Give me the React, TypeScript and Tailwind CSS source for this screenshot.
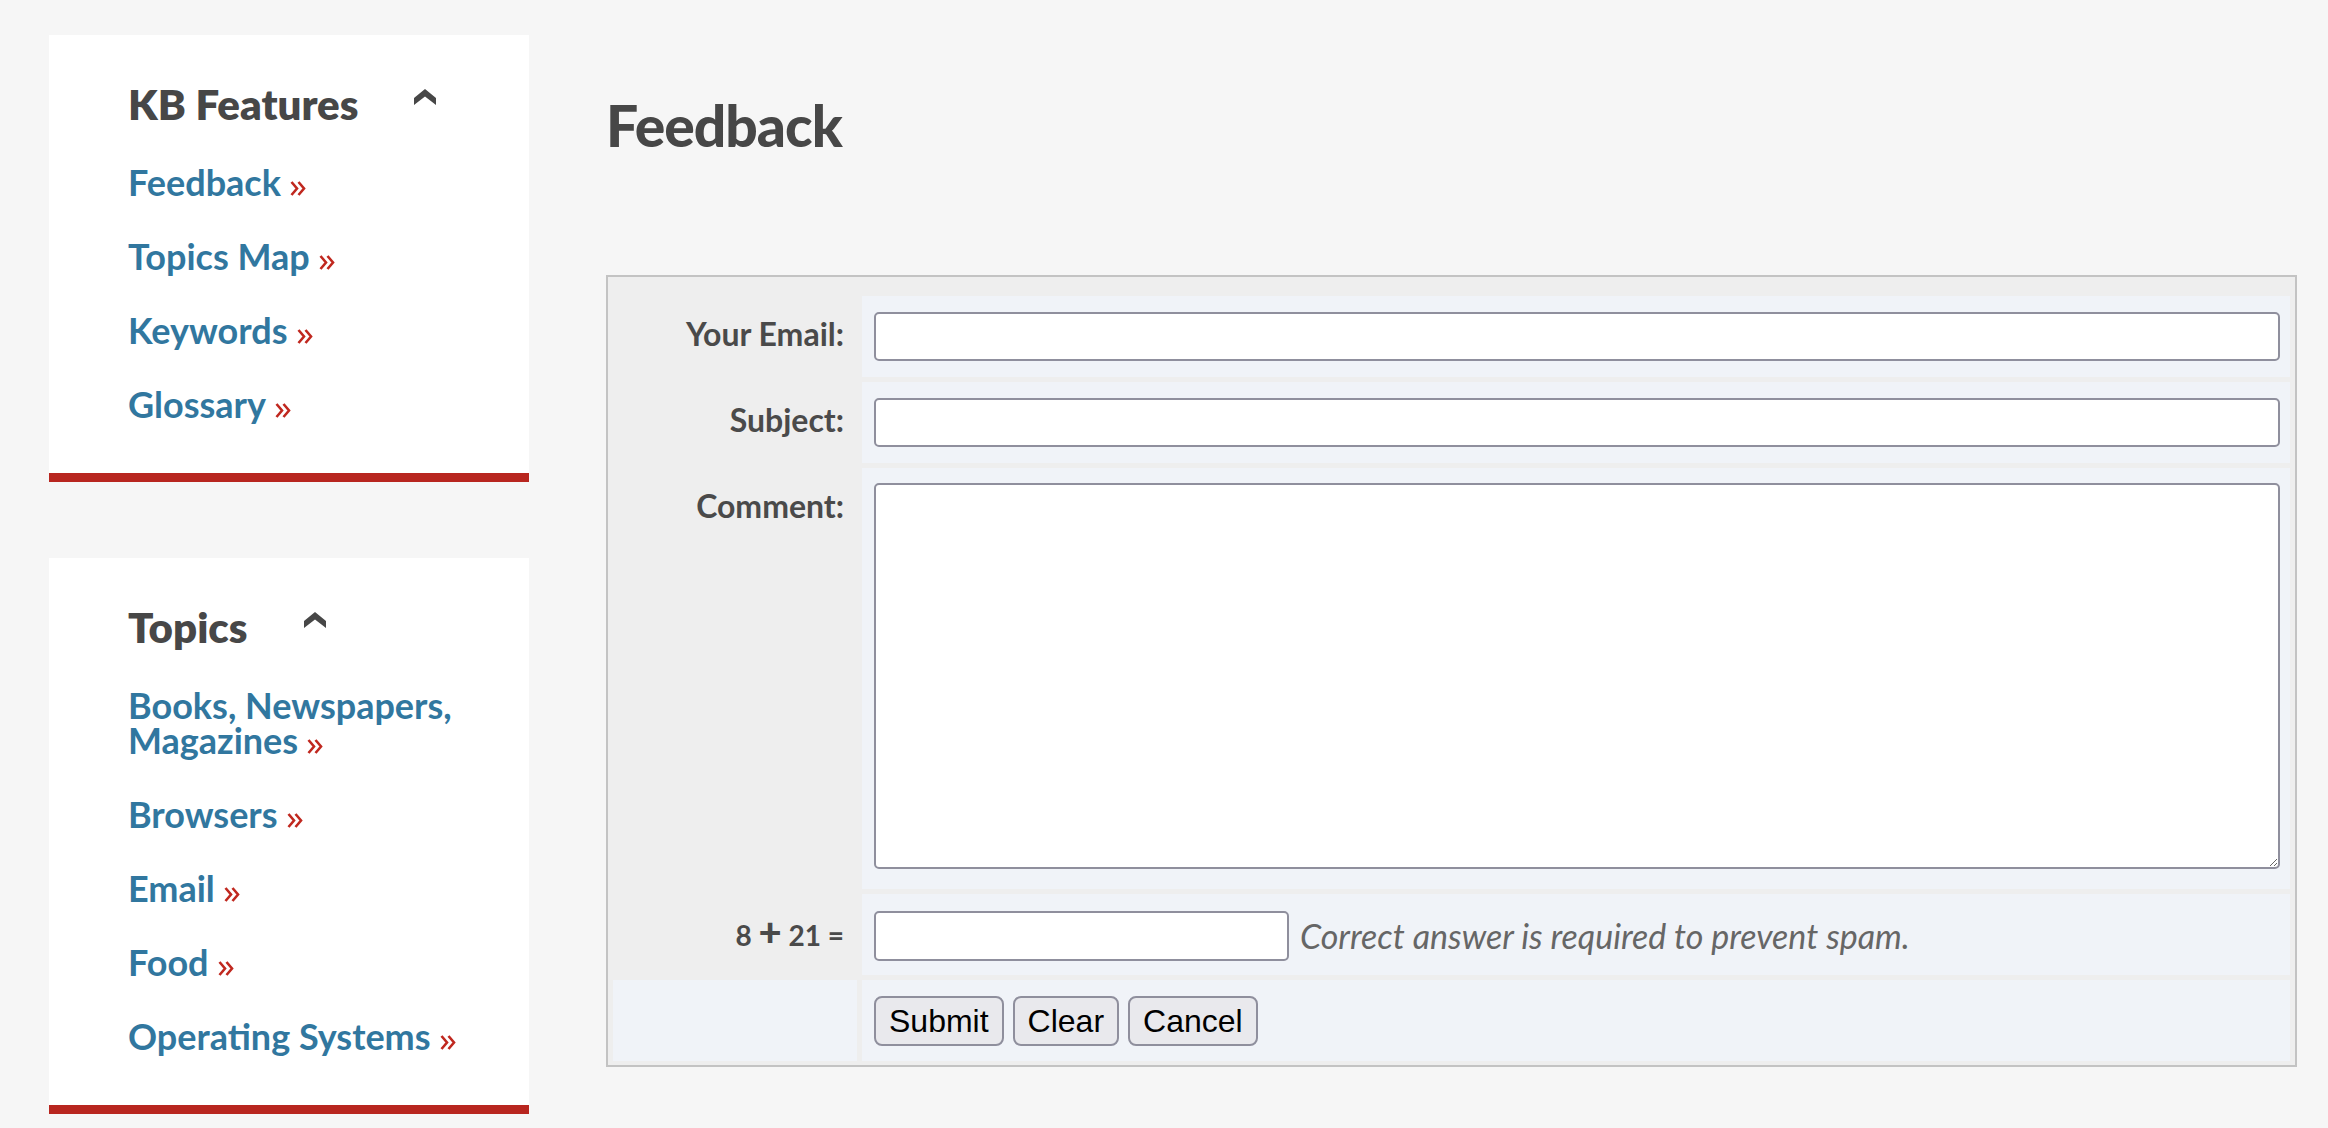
const kbFeatures = ['Feedback', 'Topics Map', 'Keywords', 'Glossary']

const topics = ['Books, Newspapers, Magazines', 'Browsers', 'Email', 'Food', 'Operating Systems']

function Caret() {
  return (
    <svg width="22" height="16" viewBox="0 0 22 16" className="ml-[56px] mt-[-14px] fill-[#474747]">
      <polygon points="0,9 11,0 22,9 22,16 11,7.5 0,16" />
    </svg>
  )
}

// red double chevron after each link
function More() {
  return (
    <svg width="17" height="17" viewBox="0 0 17 17" className="inline-block ml-[9px] align-[-1px] stroke-[#c0281f] fill-none">
      <polyline points="1.5,2 7,8.5 1.5,15" strokeWidth="2.6" />
      <polyline points="8.5,2 14,8.5 8.5,15" strokeWidth="2.6" />
    </svg>
  )
}

function SideCard({ title, links }: { title: string; links: string[] }) {
  return (
    <div className="bg-white border-b-[9px] border-[#b8261f] pl-[79px] pr-6 pt-[45px] pb-[51px]">
      <div className="flex items-center">
        <h2 className="text-[42px] leading-[48px] font-extrabold text-[#474747]">{title}</h2>
        <Caret />
      </div>
      <ul className="mt-[37px] flex flex-col gap-[39px]">
        {links.map((link) => (
          <li key={link} className="text-[36px] leading-[35px] font-bold text-[#31779f]">
            {link}
            <More />
          </li>
        ))}
      </ul>
    </div>
  )
}

function Label({ children }: { children: React.ReactNode }) {
  return (
    <div className="bg-[#eeeeee] text-right pr-[13px] pt-[18px] text-[32px] leading-[40px] font-bold text-[#4a4a4a]">
      {children}
    </div>
  )
}

const inputCls =
  'block w-full h-[49px] bg-white border-2 border-[#8f8f9d] rounded-[5px] px-2 text-[28px] outline-none'

export default function App() {
  return (
    <div className="min-h-screen bg-[#f6f6f6] flex pl-[49px] pt-[35px] pr-[31px] pb-10 font-['Lato',sans-serif]">
      {/* Sidebar */}
      <aside className="w-[480px] shrink-0 flex flex-col gap-[76px]">
        <SideCard title="KB Features" links={kbFeatures} />
        <SideCard title="Topics" links={topics} />
      </aside>

      {/* Feedback form */}
      <main className="flex-1 ml-[77px]">
        <h1 className="mt-[61px] text-[57px] leading-[58px] font-black text-[#474747] tracking-[-1px]">
          Feedback
        </h1>

        <form className="mt-[121px] border-2 border-[#c3c3c3] bg-[#eeeeee] grid grid-cols-[244px_1fr] gap-[5px] px-[5px] pt-[19px] pb-[4px]">
          <Label>Your Email:</Label>
          <div className="bg-[#f0f3f8] pl-3 pr-[10px] py-4">
            <input type="text" className={inputCls} />
          </div>

          <Label>Subject:</Label>
          <div className="bg-[#f0f3f8] pl-3 pr-[10px] py-4">
            <input type="text" className={inputCls} />
          </div>

          <Label>Comment:</Label>
          <div className="bg-[#f0f3f8] pl-3 pr-[10px] pt-[15px] pb-[20px]">
            <textarea className="block w-full h-[386px] bg-white border-2 border-[#8f8f9d] rounded-[5px] p-2 text-[28px] outline-none" />
          </div>

          <div className="bg-[#eeeeee] text-right pr-[13px] pt-[21px] text-[28px] leading-[40px] font-bold text-[#4a4a4a]">
            8 <span className="text-[40px] font-black leading-[30px]">+</span> 21 =
          </div>
          <div className="bg-[#f0f3f8] pl-3 pr-[10px] pt-4 pb-[14px] flex items-center gap-[11px]">
            <input type="text" className="block w-[415px] h-[50px] bg-white border-2 border-[#8f8f9d] rounded-[5px] px-2 text-[28px] outline-none" />
            <span className="italic text-[34px] text-[#666666]">Correct answer is required to prevent spam.</span>
          </div>

          <div className="bg-[#f0f3f8]" />
          <div className="bg-[#f0f3f8] pl-3 pr-[10px] pt-4 pb-[15px] flex gap-[9px] font-['Liberation_Sans',Arial,sans-serif]">
            {['Submit', 'Clear', 'Cancel'].map((b) => (
              <button
                key={b}
                type="button"
                className="h-[50px] px-[13px] bg-[#e9e9ed] border-2 border-[#8f8f9d] rounded-[8px] text-[32px] leading-none text-black"
              >
                {b}
              </button>
            ))}
          </div>
        </form>
      </main>
    </div>
  )
}
